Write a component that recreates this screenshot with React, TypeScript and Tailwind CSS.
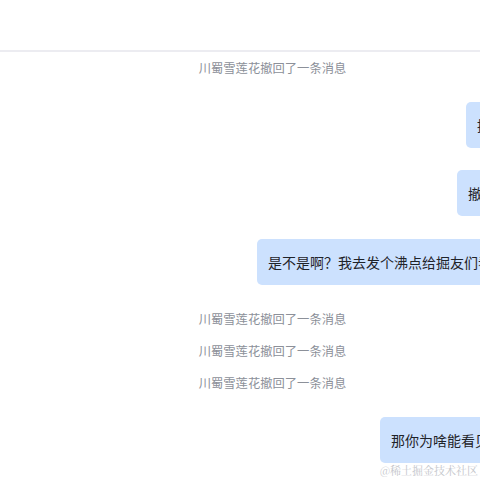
import React from 'react'

const FONT = { fontFamily: '"Noto Sans CJK SC", "Noto Sans", sans-serif' }

type Item =
  | { kind: 'notice'; text: string; gap: string }
  | { kind: 'bubble'; text: string; gap: string; width: string }

// messages in order, top to bottom
const ITEMS: Item[] = [
  { kind: 'notice', text: '川蜀雪莲花撤回了一条消息', gap: 'mt-[7px]' },
  { kind: 'bubble', text: '接收到了', gap: 'mt-[24px]', width: 'w-[64px]' },
  { kind: 'bubble', text: '撤回测试', gap: 'mt-[22px]', width: 'w-[73px]' },
  { kind: 'bubble', text: '是不是啊？我去发个沸点给掘友们看看', gap: 'mt-[23px]', width: 'w-[273px]' },
  { kind: 'notice', text: '川蜀雪莲花撤回了一条消息', gap: 'mt-[25px]' },
  { kind: 'notice', text: '川蜀雪莲花撤回了一条消息', gap: 'mt-[13px]' },
  { kind: 'notice', text: '川蜀雪莲花撤回了一条消息', gap: 'mt-[13px]' },
  { kind: 'bubble', text: '那你为啥能看见呢？', gap: 'mt-[24px]', width: 'w-[150px]' },
]

const Notice: React.FC<{ text: string; gap: string }> = ({ text, gap }) => (
  <div className={`${gap} text-center text-[12.3px] leading-[19px] text-[#8c9099]`}>{text}</div>
)

const Bubble: React.FC<{ text: string; gap: string; width: string }> = ({ text, gap, width }) => (
  <div className={`${gap} flex justify-end pr-[15px]`}>
    <div
      className={`${width} h-[46px] flex items-center px-[11px] rounded-[5px] bg-[#cce1fe] text-[14px] text-[#1f2329] whitespace-nowrap`}
    >
      {text}
    </div>
  </div>
)

export default function App() {
  return (
    <div className="relative w-[480px] h-[480px] overflow-hidden bg-white" style={FONT}>
      <div className="w-[545px] flex flex-col">
        {/* header */}
        <div className="h-[52px] bg-white border-b-2 border-[#ececf1]" />
        {ITEMS.map((item, i) =>
          item.kind === 'notice' ? (
            <Notice key={i} text={item.text} gap={item.gap} />
          ) : (
            <Bubble key={i} text={item.text} gap={item.gap} width={item.width} />
          )
        )}
      </div>
      {/* watermark */}
      <div
        className="absolute right-[2px] bottom-[3px] text-[11px] leading-[13px] text-[#c4c6cb]"
        style={{ fontFamily: '"Noto Serif CJK SC", "Noto Sans CJK SC", serif' }}
      >
        @稀土掘金技术社区
      </div>
    </div>
  )
}
